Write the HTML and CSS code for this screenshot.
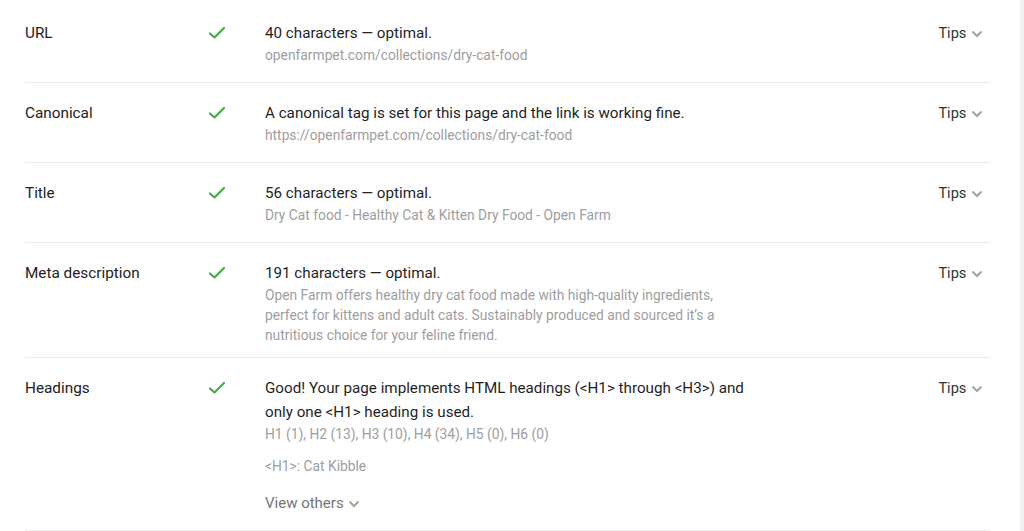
FILE: index.html
```html
<!DOCTYPE html>
<html lang="en">
<head>
    <meta charset="UTF-8">
    <meta name="viewport" content="width=device-width, initial-scale=1.0">
    <title>SEO audit - page details</title>
    <link rel="stylesheet" href="styles.css">
</head>
<body>

    <div class="page">
        <div class="report">

            <div class="row">
                <div class="label">URL</div>
                <div class="status">
                    <svg width="18" height="14" viewBox="0 0 18 14"><path d="M2 7.5 L6.5 11.5 L16 2" fill="none" stroke="#3fae49" stroke-width="2.2" stroke-linecap="round" stroke-linejoin="round"/></svg>
                </div>
                <div class="content">
                    <p class="main">40 characters — optimal.</p>
                    <p class="sub">openfarmpet.com/collections/dry-cat-food</p>
                </div>
                <div class="tips">Tips <span class="chev"><svg width="12" height="8" viewBox="0 0 12 8"><path d="M1.5 1.5 L6 6 L10.5 1.5" fill="none" stroke="#a3a3a3" stroke-width="2"/></svg></span></div>
            </div>

            <div class="row">
                <div class="label">Canonical</div>
                <div class="status">
                    <svg width="18" height="14" viewBox="0 0 18 14"><path d="M2 7.5 L6.5 11.5 L16 2" fill="none" stroke="#3fae49" stroke-width="2.2" stroke-linecap="round" stroke-linejoin="round"/></svg>
                </div>
                <div class="content">
                    <p class="main">A canonical tag is set for this page and the link is working fine.</p>
                    <p class="sub">https://openfarmpet.com/collections/dry-cat-food</p>
                </div>
                <div class="tips">Tips <span class="chev"><svg width="12" height="8" viewBox="0 0 12 8"><path d="M1.5 1.5 L6 6 L10.5 1.5" fill="none" stroke="#a3a3a3" stroke-width="2"/></svg></span></div>
            </div>

            <div class="row">
                <div class="label">Title</div>
                <div class="status">
                    <svg width="18" height="14" viewBox="0 0 18 14"><path d="M2 7.5 L6.5 11.5 L16 2" fill="none" stroke="#3fae49" stroke-width="2.2" stroke-linecap="round" stroke-linejoin="round"/></svg>
                </div>
                <div class="content">
                    <p class="main">56 characters — optimal.</p>
                    <p class="sub">Dry Cat food - Healthy Cat &amp; Kitten Dry Food - Open Farm</p>
                </div>
                <div class="tips">Tips <span class="chev"><svg width="12" height="8" viewBox="0 0 12 8"><path d="M1.5 1.5 L6 6 L10.5 1.5" fill="none" stroke="#a3a3a3" stroke-width="2"/></svg></span></div>
            </div>

            <div class="row">
                <div class="label">Meta description</div>
                <div class="status">
                    <svg width="18" height="14" viewBox="0 0 18 14"><path d="M2 7.5 L6.5 11.5 L16 2" fill="none" stroke="#3fae49" stroke-width="2.2" stroke-linecap="round" stroke-linejoin="round"/></svg>
                </div>
                <div class="content">
                    <p class="main">191 characters — optimal.</p>
                    <p class="sub">Open Farm offers healthy dry cat food made with high-quality ingredients, perfect for kittens and adult cats. Sustainably produced and sourced it’s a nutritious choice for your feline friend.</p>
                </div>
                <div class="tips">Tips <span class="chev"><svg width="12" height="8" viewBox="0 0 12 8"><path d="M1.5 1.5 L6 6 L10.5 1.5" fill="none" stroke="#a3a3a3" stroke-width="2"/></svg></span></div>
            </div>

            <div class="row">
                <div class="label">Headings</div>
                <div class="status">
                    <svg width="18" height="14" viewBox="0 0 18 14"><path d="M2 7.5 L6.5 11.5 L16 2" fill="none" stroke="#3fae49" stroke-width="2.2" stroke-linecap="round" stroke-linejoin="round"/></svg>
                </div>
                <div class="content">
                    <p class="main">Good! Your page implements HTML headings (&lt;H1&gt; through &lt;H3&gt;) and only one &lt;H1&gt; heading is used.</p>
                    <p class="sub">H1 (1), H2 (13), H3 (10), H4 (34), H5 (0), H6 (0)</p>
                    <p class="sub h1-line">&lt;H1&gt;: Cat Kibble</p>
                    <p class="more">View others <span class="chev"><svg width="12" height="8" viewBox="0 0 12 8"><path d="M1.5 1.5 L6 6 L10.5 1.5" fill="none" stroke="#a3a3a3" stroke-width="2"/></svg></span></p>
                </div>
                <div class="tips">Tips <span class="chev"><svg width="12" height="8" viewBox="0 0 12 8"><path d="M1.5 1.5 L6 6 L10.5 1.5" fill="none" stroke="#a3a3a3" stroke-width="2"/></svg></span></div>
            </div>

        </div>
        <div class="rail"></div>
    </div>

</body>
</html>
```

FILE: styles.css
```css
body {
    font-family: Roboto, "Liberation Sans", Arial, sans-serif;
    margin: 0;
    padding: 0;
    background: #fff;
    color: #222;
    overflow: hidden;
}

.page {
    display: flex;
    height: 531px;
}

.report {
    flex: 1;
    padding: 3px 30px 0 25px;
}

.rail {
    width: 4px;
    background: #f1f1f1;
}

.row {
    display: flex;
    align-items: flex-start;
    min-height: 80px;
    box-sizing: border-box;
    padding: 18px 0 12px;
    border-bottom: 1px solid #ececec;
}

.label {
    width: 183px;
    font-size: 15.3px;
    line-height: 24px;
}

.status {
    width: 57px;
    height: 24px;
    display: flex;
    align-items: center;
}

.content {
    width: 492px;
    flex: none;
}

.content p {
    margin: 0;
}

.main {
    font-size: 15.2px;
    line-height: 24px;
    color: #1f1f1f;
}

.sub {
    font-size: 13.8px;
    line-height: 20px;
    color: #9e9e9e;
}

.h1-line {
    margin-top: 12px !important;
}

.more {
    margin: 17px 0 5px !important;
    font-size: 15px;
    line-height: 20px;
    color: #757575;
}

.tips {
    margin-left: auto;
    margin-right: 7px;
    font-size: 14.6px;
    line-height: 24px;
    color: #333;
}

.chev {
    display: inline-block;
    vertical-align: middle;
    margin-left: 1px;
}

.chev svg {
    display: block;
}
```
